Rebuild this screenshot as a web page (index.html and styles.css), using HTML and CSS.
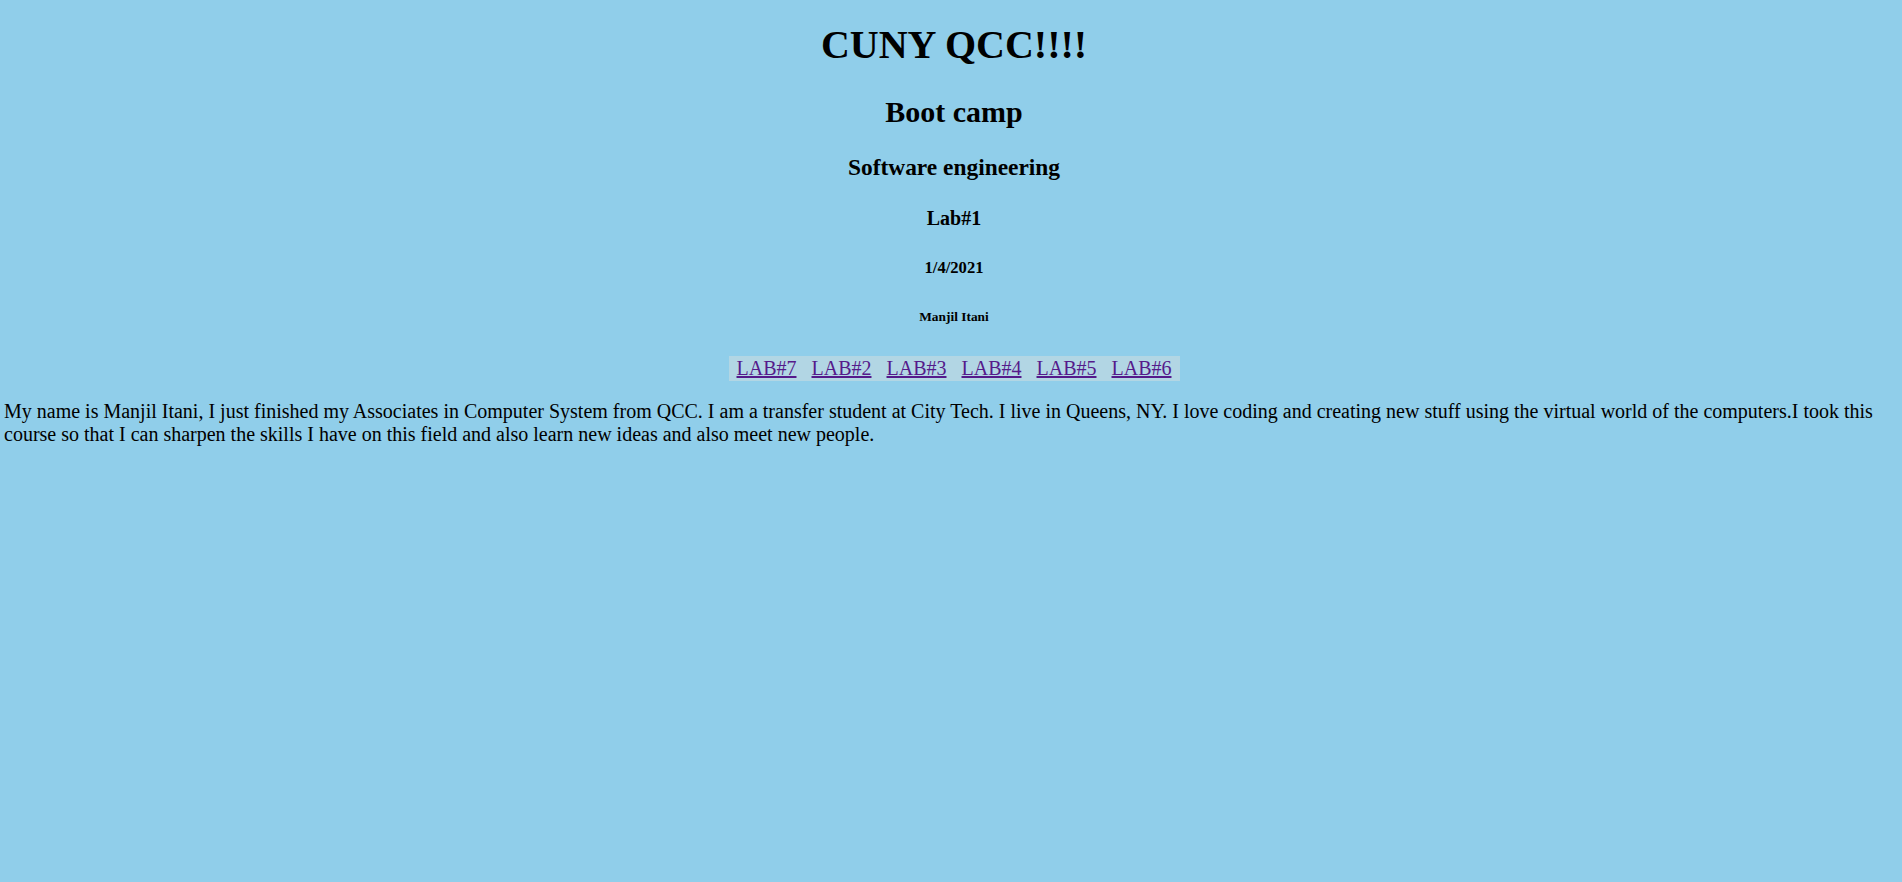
FILE: index.html
```html
<!DOCTYPE html>
<html>
<head>
<meta charset="utf-8">
<title>CUNY QCC</title>
<link rel="stylesheet" href="styles.css">
</head>
<body>
<header class="header">
<h1 class="title">CUNY QCC!!!!</h1>
<h2>Boot camp</h2>
<h3>Software engineering</h3>
<h4>Lab#1</h4>
<h5>1/4/2021</h5>
<h6>Manjil Itani</h6>
<nav class="nav">
<a href="#">LAB#7</a>
<a href="#">LAB#2</a>
<a href="#">LAB#3</a>
<a href="#">LAB#4</a>
<a href="#">LAB#5</a>
<a href="#">LAB#6</a>
</nav>
</header>
<p class="about">My name is Manjil Itani, I just finished my Associates in Computer System from QCC. I am a transfer student at City Tech. I live in Queens, NY. I love coding and creating new stuff using the virtual world of the computers.I took this course so that I can sharpen the skills I have on this field and also learn new ideas and also meet new people.</p>
</body>
</html>
```

FILE: styles.css
```css
html {
  background: #90ceea;
}
body {
  margin: 0;
  padding: 0 0 0 6px;
  font-family: "Liberation Serif", "Times New Roman", serif;
  font-size: 20px;
  color: #000;
  background: #90ceea;
}
.header {
  text-align: center;
}
.title {
  margin-top: 21px;
}
.nav {
  display: inline-flex;
  gap: 15px;
  padding: 1px 8px;
  background: #b2d6e4;
}
.nav a {
  color: #551a8b;
}
.about {
  margin: 19px 0 16px -2px;
}
```
